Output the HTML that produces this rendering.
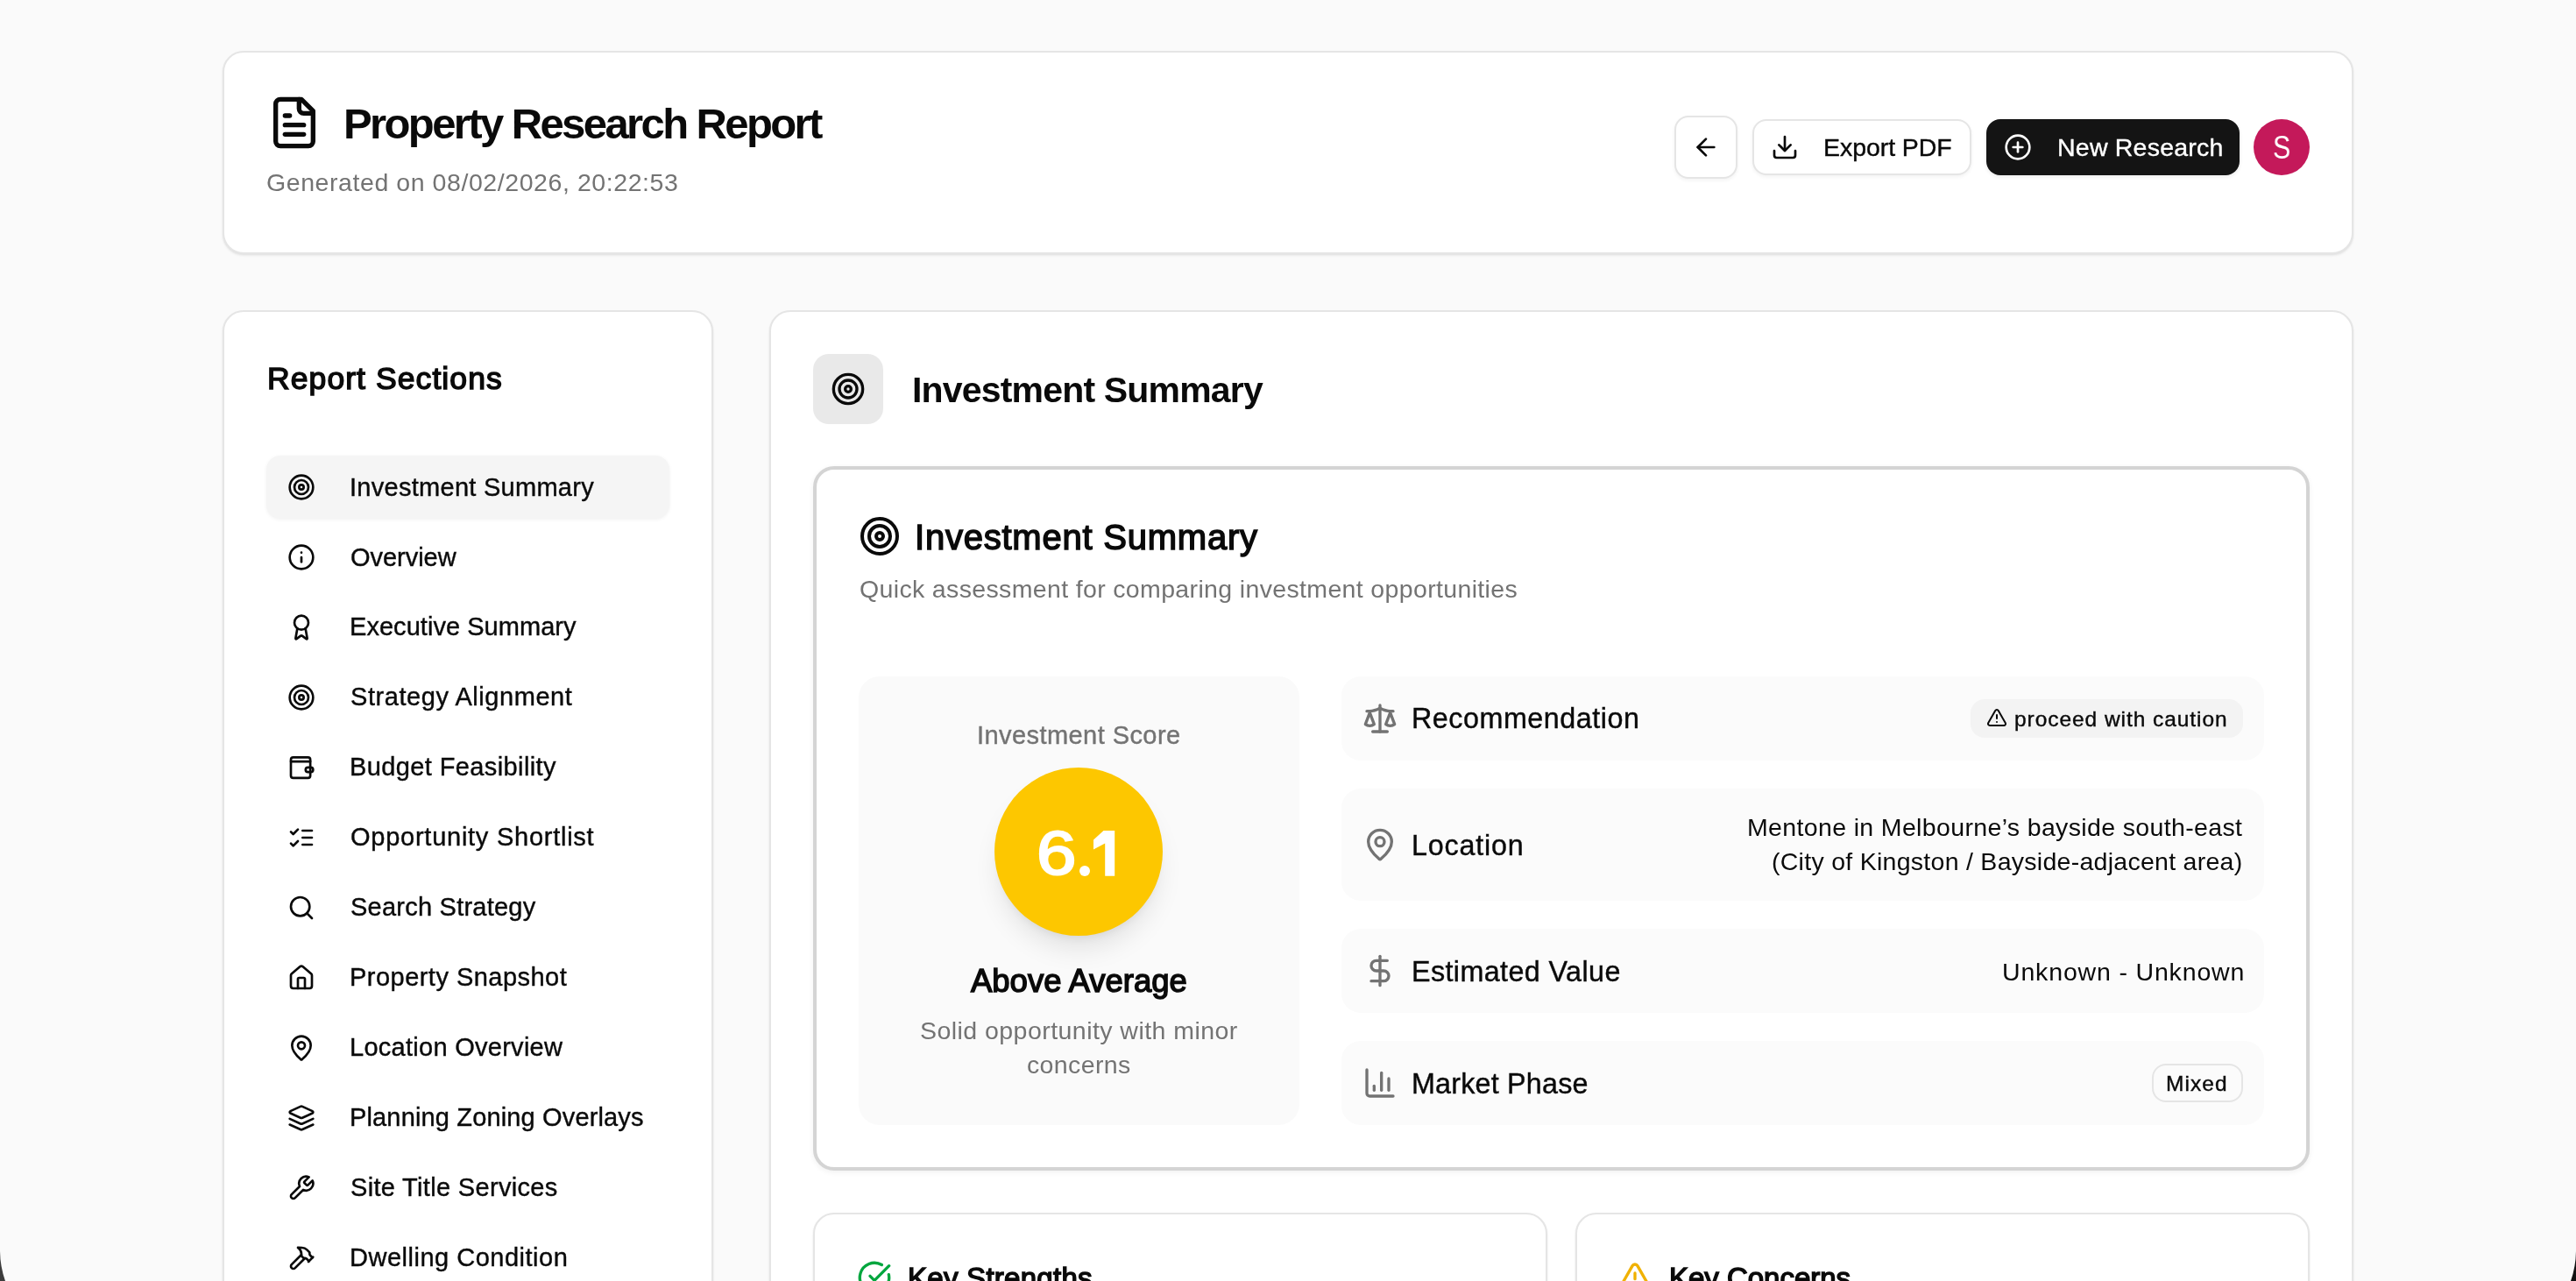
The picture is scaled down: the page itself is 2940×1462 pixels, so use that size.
<!DOCTYPE html>
<html><head><meta charset="utf-8"><title>Property Research Report</title>
<style>
html,body{margin:0;padding:0;}
body{width:2940px;height:1462px;overflow:hidden;background:#fafafa;position:relative;font-family:"Liberation Sans",sans-serif;color:#0a0a0a;}
.b{position:absolute;box-sizing:border-box;}
.t{position:absolute;white-space:nowrap;line-height:1;will-change:transform;}
.ic{position:absolute;}
.card{background:#fff;border:2px solid #e5e5e5;border-radius:24px;box-shadow:0 2px 3px rgba(0,0,0,0.06),0 1px 2px rgba(0,0,0,0.05);}
</style></head><body>
<!-- header card -->
<div class="b card" style="left:254px;top:58px;width:2432px;height:232px;"></div>
<div class="b" style="left:1911px;top:132px;width:72px;height:72px;border:2px solid #e5e5e5;border-radius:16px;background:#fff;box-shadow:0 2px 4px rgba(0,0,0,0.05);"></div>
<div class="b" style="left:2000px;top:136px;width:250px;height:64px;border:2px solid #e5e5e5;border-radius:16px;background:#fff;box-shadow:0 2px 4px rgba(0,0,0,0.05);"></div>
<div class="b" style="left:2267px;top:136px;width:289px;height:64px;border-radius:16px;background:#141414;box-shadow:0 2px 4px rgba(0,0,0,0.08);"></div>
<div class="b" style="left:2572px;top:136px;width:64px;height:64px;border-radius:50%;background:#c4195a;"></div>
<!-- sidebar -->
<div class="b card" style="left:254px;top:354px;width:560px;height:1300px;"></div>
<div class="b" style="left:304px;top:520px;width:460px;height:72px;border-radius:16px;background:#f5f5f5;box-shadow:0 1px 4px rgba(0,0,0,0.06);"></div>
<!-- main -->
<div class="b card" style="left:878px;top:354px;width:1808px;height:1300px;"></div>
<div class="b" style="left:928px;top:404px;width:80px;height:80px;border-radius:18px;background:#e9e9e9;"></div>
<div class="b" style="left:928px;top:532px;width:1708px;height:804px;border:4px solid #d4d4d4;border-radius:24px;background:#fff;box-shadow:0 2px 6px rgba(0,0,0,0.06);"></div>
<div class="b" style="left:980px;top:772px;width:502.67px;height:512px;border-radius:24px;background:#fafafa;"></div>
<div class="b" style="left:1135px;top:876px;width:192px;height:192px;border-radius:50%;background:#fdc700;box-shadow:0 20px 30px -6px rgba(0,0,0,0.1),0 8px 12px -8px rgba(0,0,0,0.1);"></div>
<div class="b" style="left:1530.67px;top:772px;width:1053.33px;height:96px;border-radius:22px;background:#fbfbfb;"></div>
<div class="b" style="left:2249px;top:798px;width:311px;height:44px;border-radius:16px;background:#f3f3f3;"></div>
<div class="b" style="left:1530.67px;top:900px;width:1053.33px;height:128px;border-radius:22px;background:#fbfbfb;"></div>
<div class="b" style="left:1530.67px;top:1060px;width:1053.33px;height:96px;border-radius:22px;background:#fbfbfb;"></div>
<div class="b" style="left:1530.67px;top:1188px;width:1053.33px;height:96px;border-radius:22px;background:#fbfbfb;"></div>
<div class="b" style="left:2455.5px;top:1214px;width:104px;height:44px;border:2px solid #e5e5e5;border-radius:16px;background:transparent;"></div>
<div class="b card" style="left:928px;top:1384px;width:838px;height:400px;"></div>
<div class="b card" style="left:1798px;top:1384px;width:838px;height:400px;"></div>
<svg style="position:absolute;left:0;top:0" width="2940" height="1462"><path d="M0 1428 A106 106 0 0 0 6 1462 L0 1462 Z" fill="#3c3c3c"/><path d="M2940 1428 A106 106 0 0 1 2934 1462 L2940 1462 Z" fill="#111"/></svg>
<svg style="position:absolute;left:0;top:0" width="2940" height="1462"><circle cx="1238" cy="994" r="6" fill="#fff"/><path d="M1259.5 948 L1272.2 948 L1272.2 999.7 L1261.2 999.7 L1261.2 962.5 L1248 969.5 L1248 958.5 Z" fill="#fff"/></svg>
<svg class="ic" style="left:304px;top:108px;" width="64" height="64" viewBox="0 0 24 24" fill="none" stroke="#0a0a0a" stroke-width="2" stroke-linecap="round" stroke-linejoin="round"><path d="M15 2H6a2 2 0 0 0-2 2v16a2 2 0 0 0 2 2h12a2 2 0 0 0 2-2V7Z"/><path d="M14 2v4a2 2 0 0 0 2 2h4"/><path d="M10 9H8"/><path d="M16 13H8"/><path d="M16 17H8"/></svg>
<svg class="ic" style="left:1931px;top:152px;" width="32" height="32" viewBox="0 0 24 24" fill="none" stroke="#0a0a0a" stroke-width="2" stroke-linecap="round" stroke-linejoin="round"><path d="m12 19-7-7 7-7"/><path d="M19 12H5"/></svg>
<svg class="ic" style="left:2021px;top:152px;" width="32" height="32" viewBox="0 0 24 24" fill="none" stroke="#0a0a0a" stroke-width="2" stroke-linecap="round" stroke-linejoin="round"><path d="M21 15v4a2 2 0 0 1-2 2H5a2 2 0 0 1-2-2v-4"/><polyline points="7 10 12 15 17 10"/><line x1="12" x2="12" y1="15" y2="3"/></svg>
<svg class="ic" style="left:2287px;top:152px;" width="32" height="32" viewBox="0 0 24 24" fill="none" stroke="#ffffff" stroke-width="2" stroke-linecap="round" stroke-linejoin="round"><circle cx="12" cy="12" r="10"/><path d="M8 12h8"/><path d="M12 8v8"/></svg>
<svg class="ic" style="left:328px;top:540px;" width="32" height="32" viewBox="0 0 24 24" fill="none" stroke="#0a0a0a" stroke-width="2" stroke-linecap="round" stroke-linejoin="round"><circle cx="12" cy="12" r="10"/><circle cx="12" cy="12" r="6"/><circle cx="12" cy="12" r="2"/></svg>
<svg class="ic" style="left:328px;top:620px;" width="32" height="32" viewBox="0 0 24 24" fill="none" stroke="#0a0a0a" stroke-width="2" stroke-linecap="round" stroke-linejoin="round"><circle cx="12" cy="12" r="10"/><path d="M12 16v-4"/><path d="M12 8h.01"/></svg>
<svg class="ic" style="left:328px;top:700px;" width="32" height="32" viewBox="0 0 24 24" fill="none" stroke="#0a0a0a" stroke-width="2" stroke-linecap="round" stroke-linejoin="round"><path d="m15.477 12.89 1.515 8.526a.5.5 0 0 1-.81.47l-3.58-2.687a1 1 0 0 0-1.197 0l-3.586 2.686a.5.5 0 0 1-.81-.469l1.514-8.526"/><circle cx="12" cy="8" r="6"/></svg>
<svg class="ic" style="left:328px;top:780px;" width="32" height="32" viewBox="0 0 24 24" fill="none" stroke="#0a0a0a" stroke-width="2" stroke-linecap="round" stroke-linejoin="round"><circle cx="12" cy="12" r="10"/><circle cx="12" cy="12" r="6"/><circle cx="12" cy="12" r="2"/></svg>
<svg class="ic" style="left:328px;top:860px;" width="32" height="32" viewBox="0 0 24 24" fill="none" stroke="#0a0a0a" stroke-width="2" stroke-linecap="round" stroke-linejoin="round"><rect x="3" y="3.3" width="16.6" height="17.6" rx="2"/><path d="M3 6.8h16.6"/><path d="M17.6 11.9h2.4a2 2 0 0 1 0 4h-2.4a2 2 0 0 1 0-4z"/></svg>
<svg class="ic" style="left:328px;top:940px;" width="32" height="32" viewBox="0 0 24 24" fill="none" stroke="#0a0a0a" stroke-width="2" stroke-linecap="round" stroke-linejoin="round"><path d="m3 17 2 2 4-4"/><path d="m3 7 2 2 4-4"/><path d="M13 6h8"/><path d="M13 12h8"/><path d="M13 18h8"/></svg>
<svg class="ic" style="left:328px;top:1020px;" width="32" height="32" viewBox="0 0 24 24" fill="none" stroke="#0a0a0a" stroke-width="2" stroke-linecap="round" stroke-linejoin="round"><circle cx="11" cy="11" r="8"/><path d="m21 21-4.3-4.3"/></svg>
<svg class="ic" style="left:328px;top:1100px;" width="32" height="32" viewBox="0 0 24 24" fill="none" stroke="#0a0a0a" stroke-width="2" stroke-linecap="round" stroke-linejoin="round"><path d="M15 21v-8a1 1 0 0 0-1-1h-4a1 1 0 0 0-1 1v8"/><path d="M3 10a2 2 0 0 1 .709-1.528l7-5.999a2 2 0 0 1 2.582 0l7 5.999A2 2 0 0 1 21 10v9a2 2 0 0 1-2 2H5a2 2 0 0 1-2-2z"/></svg>
<svg class="ic" style="left:328px;top:1180px;" width="32" height="32" viewBox="0 0 24 24" fill="none" stroke="#0a0a0a" stroke-width="2" stroke-linecap="round" stroke-linejoin="round"><path d="M20 10c0 4.993-5.539 10.193-7.399 11.799a1 1 0 0 1-1.202 0C9.539 20.193 4 14.993 4 10a8 8 0 0 1 16 0"/><circle cx="12" cy="10" r="3"/></svg>
<svg class="ic" style="left:328px;top:1260px;" width="32" height="32" viewBox="0 0 24 24" fill="none" stroke="#0a0a0a" stroke-width="2" stroke-linecap="round" stroke-linejoin="round"><path d="m12.83 2.18a2 2 0 0 0-1.66 0L2.6 6.08a1 1 0 0 0 0 1.83l8.58 3.91a2 2 0 0 0 1.66 0l8.58-3.9a1 1 0 0 0 0-1.83Z"/><path d="m22 17.65-9.17 4.16a2 2 0 0 1-1.66 0L2 17.65"/><path d="m22 12.65-9.17 4.16a2 2 0 0 1-1.66 0L2 12.65"/></svg>
<svg class="ic" style="left:328px;top:1340px;" width="32" height="32" viewBox="0 0 24 24" fill="none" stroke="#0a0a0a" stroke-width="2" stroke-linecap="round" stroke-linejoin="round"><path d="M14.7 6.3a1 1 0 0 0 0 1.4l1.6 1.6a1 1 0 0 0 1.4 0l3.77-3.77a6 6 0 0 1-7.94 7.94l-6.91 6.91a2.12 2.12 0 0 1-3-3l6.91-6.91a6 6 0 0 1 7.94-7.94l-3.76 3.76z"/></svg>
<svg class="ic" style="left:328px;top:1420px;" width="32" height="32" viewBox="0 0 24 24" fill="none" stroke="#0a0a0a" stroke-width="2" stroke-linecap="round" stroke-linejoin="round"><path d="m15 12-8.373 8.373a1 1 0 1 1-3-3L12 9"/><path d="m18 15 4-4"/><path d="m21.5 11.5-1.914-1.914A2 2 0 0 1 19 8.172V7l-2.26-2.26a6 6 0 0 0-4.202-1.756L9 2.96l.92.82A6.18 6.18 0 0 1 12 8.4V10l2 2h1.172a2 2 0 0 1 1.414.586L18.5 14.5"/></svg>
<svg class="ic" style="left:948px;top:424px;" width="40" height="40" viewBox="0 0 24 24" fill="none" stroke="#0a0a0a" stroke-width="2" stroke-linecap="round" stroke-linejoin="round"><circle cx="12" cy="12" r="10"/><circle cx="12" cy="12" r="6"/><circle cx="12" cy="12" r="2"/></svg>
<svg class="ic" style="left:980px;top:588px;" width="48" height="48" viewBox="0 0 24 24" fill="none" stroke="#0a0a0a" stroke-width="2" stroke-linecap="round" stroke-linejoin="round"><circle cx="12" cy="12" r="10"/><circle cx="12" cy="12" r="6"/><circle cx="12" cy="12" r="2"/></svg>
<svg class="ic" style="left:1555px;top:800px;" width="40" height="40" viewBox="0 0 24 24" fill="none" stroke="#737373" stroke-width="2" stroke-linecap="round" stroke-linejoin="round"><path d="m16 16 3-8 3 8c-.87.65-1.92 1-3 1s-2.13-.35-3-1Z"/><path d="m2 16 3-8 3 8c-.87.65-1.92 1-3 1s-2.13-.35-3-1Z"/><path d="M7 21h10"/><path d="M12 3v18"/><path d="M3 7h2c2 0 5-1 7-2 2 1 5 2 7 2h2"/></svg>
<svg class="ic" style="left:1555px;top:944px;" width="40" height="40" viewBox="0 0 24 24" fill="none" stroke="#737373" stroke-width="2" stroke-linecap="round" stroke-linejoin="round"><path d="M20 10c0 4.993-5.539 10.193-7.399 11.799a1 1 0 0 1-1.202 0C9.539 20.193 4 14.993 4 10a8 8 0 0 1 16 0"/><circle cx="12" cy="10" r="3"/></svg>
<svg class="ic" style="left:1555px;top:1088px;" width="40" height="40" viewBox="0 0 24 24" fill="none" stroke="#737373" stroke-width="2" stroke-linecap="round" stroke-linejoin="round"><line x1="12" x2="12" y1="2" y2="22"/><path d="M17 5H9.5a3.5 3.5 0 0 0 0 7h5a3.5 3.5 0 0 1 0 7H6"/></svg>
<svg class="ic" style="left:1555px;top:1216px;" width="40" height="40" viewBox="0 0 24 24" fill="none" stroke="#737373" stroke-width="2" stroke-linecap="round" stroke-linejoin="round"><path d="M3 3v16a2 2 0 0 0 2 2h16"/><path d="M18 17V9"/><path d="M13 17V5"/><path d="M8 17v-3"/></svg>
<svg class="ic" style="left:2267px;top:807px;" width="24" height="24" viewBox="0 0 24 24" fill="none" stroke="#0a0a0a" stroke-width="2" stroke-linecap="round" stroke-linejoin="round"><path d="m21.73 18-8-14a2 2 0 0 0-3.48 0l-8 14A2 2 0 0 0 4 21h16a2 2 0 0 0 1.73-3"/><path d="M12 9v4"/><path d="M12 17h.01"/></svg>
<svg class="ic" style="left:978px;top:1438px;" width="40" height="40" viewBox="0 0 24 24" fill="none" stroke="#00a63e" stroke-width="2" stroke-linecap="round" stroke-linejoin="round"><path d="M21.801 10A10 10 0 1 1 17 3.335"/><path d="m9 11 3 3L22 4"/></svg>
<svg class="ic" style="left:1846px;top:1438px;" width="40" height="40" viewBox="0 0 24 24" fill="none" stroke="#f0b100" stroke-width="2" stroke-linecap="round" stroke-linejoin="round"><path d="m21.73 18-8-14a2 2 0 0 0-3.48 0l-8 14A2 2 0 0 0 4 21h16a2 2 0 0 0 1.73-3"/><path d="M12 9v4"/><path d="M12 17h.01"/></svg>
<div class="t" style="left:392.0px;top:116.9px;font-size:49px;font-weight:bold;letter-spacing:-2.606px;color:#0a0a0a;">Property Research Report</div>
<div class="t" style="left:303.7px;top:193.5px;font-size:28.5px;font-weight:normal;letter-spacing:0.569px;color:#737373;">Generated on 08/02/2026, 20:22:53</div>
<div class="t" style="left:2081.4px;top:153.6px;font-size:28.5px;font-weight:normal;letter-spacing:-0.064px;color:#0a0a0a;-webkit-text-stroke:0.4px #0a0a0a;">Export PDF</div>
<div class="t" style="left:2347.5px;top:153.6px;font-size:28.5px;font-weight:normal;letter-spacing:0.222px;color:#ffffff;-webkit-text-stroke:0.4px #ffffff;">New Research</div>
<div class="t" style="left:2594.2px;top:151.2px;font-size:36.5px;font-weight:normal;letter-spacing:0.000px;color:#ffffff;transform:scaleX(0.8318);transform-origin:0 0;">S</div>
<div class="t" style="left:304.5px;top:414.5px;font-size:35.5px;font-weight:normal;letter-spacing:1.084px;color:#0a0a0a;-webkit-text-stroke:1.5px #0a0a0a;">Report Sections</div>
<div class="t" style="left:399.2px;top:541.6px;font-size:29px;font-weight:normal;letter-spacing:0.278px;color:#0a0a0a;-webkit-text-stroke:0.4px #0a0a0a;">Investment Summary</div>
<div class="t" style="left:400.2px;top:621.5px;font-size:29px;font-weight:normal;letter-spacing:-0.031px;color:#0a0a0a;-webkit-text-stroke:0.4px #0a0a0a;">Overview</div>
<div class="t" style="left:399.2px;top:701.4px;font-size:29px;font-weight:normal;letter-spacing:0.040px;color:#0a0a0a;-webkit-text-stroke:0.4px #0a0a0a;">Executive Summary</div>
<div class="t" style="left:400.2px;top:781.4px;font-size:29px;font-weight:normal;letter-spacing:0.556px;color:#0a0a0a;-webkit-text-stroke:0.4px #0a0a0a;">Strategy Alignment</div>
<div class="t" style="left:399.2px;top:861.2px;font-size:29px;font-weight:normal;letter-spacing:0.388px;color:#0a0a0a;-webkit-text-stroke:0.4px #0a0a0a;">Budget Feasibility</div>
<div class="t" style="left:400.2px;top:941.1px;font-size:29px;font-weight:normal;letter-spacing:0.746px;color:#0a0a0a;-webkit-text-stroke:0.4px #0a0a0a;">Opportunity Shortlist</div>
<div class="t" style="left:400.2px;top:1021.1px;font-size:29px;font-weight:normal;letter-spacing:0.233px;color:#0a0a0a;-webkit-text-stroke:0.4px #0a0a0a;">Search Strategy</div>
<div class="t" style="left:399.2px;top:1100.9px;font-size:29px;font-weight:normal;letter-spacing:0.472px;color:#0a0a0a;-webkit-text-stroke:0.4px #0a0a0a;">Property Snapshot</div>
<div class="t" style="left:399.2px;top:1180.8px;font-size:29px;font-weight:normal;letter-spacing:0.274px;color:#0a0a0a;-webkit-text-stroke:0.4px #0a0a0a;">Location Overview</div>
<div class="t" style="left:399.2px;top:1260.8px;font-size:29px;font-weight:normal;letter-spacing:0.149px;color:#0a0a0a;-webkit-text-stroke:0.4px #0a0a0a;">Planning Zoning Overlays</div>
<div class="t" style="left:400.2px;top:1340.6px;font-size:29px;font-weight:normal;letter-spacing:0.323px;color:#0a0a0a;-webkit-text-stroke:0.4px #0a0a0a;">Site Title Services</div>
<div class="t" style="left:399.2px;top:1420.5px;font-size:29px;font-weight:normal;letter-spacing:0.508px;color:#0a0a0a;-webkit-text-stroke:0.4px #0a0a0a;">Dwelling Condition</div>
<div class="t" style="left:1040.5px;top:424.8px;font-size:41px;font-weight:bold;letter-spacing:-0.818px;color:#0a0a0a;">Investment Summary</div>
<div class="t" style="left:1044.2px;top:593.2px;font-size:40px;font-weight:normal;letter-spacing:0.771px;color:#0a0a0a;-webkit-text-stroke:1.5px #0a0a0a;">Investment Summary</div>
<div class="t" style="left:981.0px;top:657.7px;font-size:28.5px;font-weight:normal;letter-spacing:0.350px;color:#737373;">Quick assessment for comparing investment opportunities</div>
<div class="t" style="left:1114.8px;top:825.1px;font-size:29px;font-weight:normal;letter-spacing:0.431px;color:#737373;-webkit-text-stroke:0.4px #737373;">Investment Score</div>
<div class="t" style="left:1183.0px;top:938.8px;font-size:70px;font-weight:normal;letter-spacing:0.000px;color:#ffffff;transform:scaleX(1.1667);transform-origin:0 0;-webkit-text-stroke:2.2px #ffffff;">6</div>
<div class="t" style="left:1108.2px;top:1102.0px;font-size:36.5px;font-weight:normal;letter-spacing:-0.010px;color:#0a0a0a;-webkit-text-stroke:1.5px #0a0a0a;">Above Average</div>
<div class="t" style="left:1049.6px;top:1161.6px;font-size:28.5px;font-weight:normal;letter-spacing:0.452px;color:#737373;">Solid opportunity with minor</div>
<div class="t" style="left:1172.0px;top:1201.3px;font-size:28.5px;font-weight:normal;letter-spacing:0.373px;color:#737373;">concerns</div>
<div class="t" style="left:1611.0px;top:804.3px;font-size:32.3px;font-weight:normal;letter-spacing:0.526px;color:#0a0a0a;-webkit-text-stroke:0.4px #0a0a0a;">Recommendation</div>
<div class="t" style="left:2299.0px;top:808.5px;font-size:24.5px;font-weight:normal;letter-spacing:0.942px;color:#0a0a0a;-webkit-text-stroke:0.4px #0a0a0a;">proceed with caution</div>
<div class="t" style="left:1611.0px;top:948.7px;font-size:32.3px;font-weight:normal;letter-spacing:0.808px;color:#0a0a0a;-webkit-text-stroke:0.4px #0a0a0a;">Location</div>
<div class="t" style="left:1994.0px;top:929.8px;font-size:28.5px;font-weight:normal;letter-spacing:0.353px;color:#0a0a0a;">Mentone in Melbourne’s bayside south-east</div>
<div class="t" style="left:2022.0px;top:968.5px;font-size:28.5px;font-weight:normal;letter-spacing:0.275px;color:#0a0a0a;">(City of Kingston / Bayside-adjacent area)</div>
<div class="t" style="left:1611.0px;top:1092.7px;font-size:32.3px;font-weight:normal;letter-spacing:0.399px;color:#0a0a0a;-webkit-text-stroke:0.4px #0a0a0a;">Estimated Value</div>
<div class="t" style="left:2284.5px;top:1095.3px;font-size:28.5px;font-weight:normal;letter-spacing:0.837px;color:#0a0a0a;">Unknown - Unknown</div>
<div class="t" style="left:1611.1px;top:1220.5px;font-size:32.3px;font-weight:normal;letter-spacing:0.201px;color:#0a0a0a;-webkit-text-stroke:0.4px #0a0a0a;">Market Phase</div>
<div class="t" style="left:2472.0px;top:1225.2px;font-size:24.5px;font-weight:normal;letter-spacing:1.068px;color:#0a0a0a;-webkit-text-stroke:0.4px #0a0a0a;">Mixed</div>
<div class="t" style="left:1036.0px;top:1442.0px;font-size:33px;font-weight:normal;letter-spacing:0.268px;color:#0a0a0a;-webkit-text-stroke:1.5px #0a0a0a;">Key Strengths</div>
<div class="t" style="left:1905.4px;top:1442.0px;font-size:33px;font-weight:normal;letter-spacing:-0.024px;color:#0a0a0a;-webkit-text-stroke:1.5px #0a0a0a;">Key Concerns</div>
</body></html>
